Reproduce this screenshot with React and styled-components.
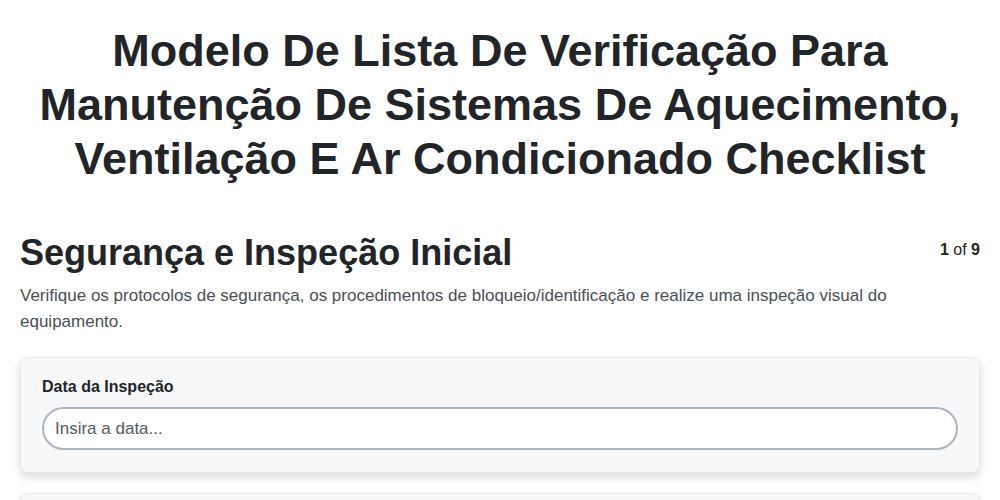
import styled, { createGlobalStyle } from "styled-components";

const GlobalStyle = createGlobalStyle`
  body {
    margin: 0;
    background: #ffffff;
    font-family: "Liberation Sans", Arial, sans-serif;
    color: #212529;
  }
`;

const Page = styled.div`
  padding: 24px 20px 0;
`;

const Title = styled.h1`
  margin: 0;
  text-align: center;
  font-size: 45px;
  line-height: 54px;
  font-weight: 700;
  color: #212529;
  padding: 0 18px;
`;

const SectionHead = styled.div`
  display: flex;
  justify-content: space-between;
  align-items: flex-start;
  margin-top: 45px;
`;

const SectionTitle = styled.h2`
  margin: 0;
  font-size: 36px;
  line-height: 44px;
  font-weight: 700;
`;

const Counter = styled.div`
  font-size: 16px;
  margin-top: 10px;
  color: #212529;
  b {
    font-weight: 700;
  }
`;

const Description = styled.p`
  margin: 8px 0 22px;
  font-size: 17px;
  line-height: 26px;
  color: #495057;
`;

const Card = styled.div`
  background: #f7f8fa;
  border: 1px solid #e6e8eb;
  border-radius: 8px;
  box-shadow: 0 4px 10px rgba(0, 0, 0, 0.15);
  padding: 20px 21px 22px;
  margin-bottom: 20px;
`;

const Label = styled.label`
  display: block;
  font-size: 16px;
  font-weight: 700;
  color: #212529;
  margin-bottom: 11px;
`;

const Input = styled.input`
  box-sizing: border-box;
  width: 100%;
  height: 43px;
  border: 2px solid #adb5bd;
  border-radius: 22px;
  padding: 0 11px;
  font-family: "Liberation Sans", Arial, sans-serif;
  font-size: 17px;
  background: #ffffff;
  outline: none;
  &::placeholder {
    color: #555b61;
  }
`;

export default function App() {
  return (
    <>
      <GlobalStyle />
      <Page>
        <Title>
          Modelo De Lista De Verificação Para Manutenção De Sistemas De
          Aquecimento, Ventilação E Ar Condicionado Checklist
        </Title>
        <SectionHead>
          <SectionTitle>Segurança e Inspeção Inicial</SectionTitle>
          <Counter>
            <b>1</b> of <b>9</b>
          </Counter>
        </SectionHead>
        <Description>
          Verifique os protocolos de segurança, os procedimentos de
          bloqueio/identificação e realize uma inspeção visual do equipamento.
        </Description>
        <Card>
          <Label>Data da Inspeção</Label>
          <Input placeholder="Insira a data..." />
        </Card>
        <Card>
          <Label>Técnico Responsável</Label>
          <Input placeholder="Insira o nome..." />
        </Card>
      </Page>
    </>
  );
}
